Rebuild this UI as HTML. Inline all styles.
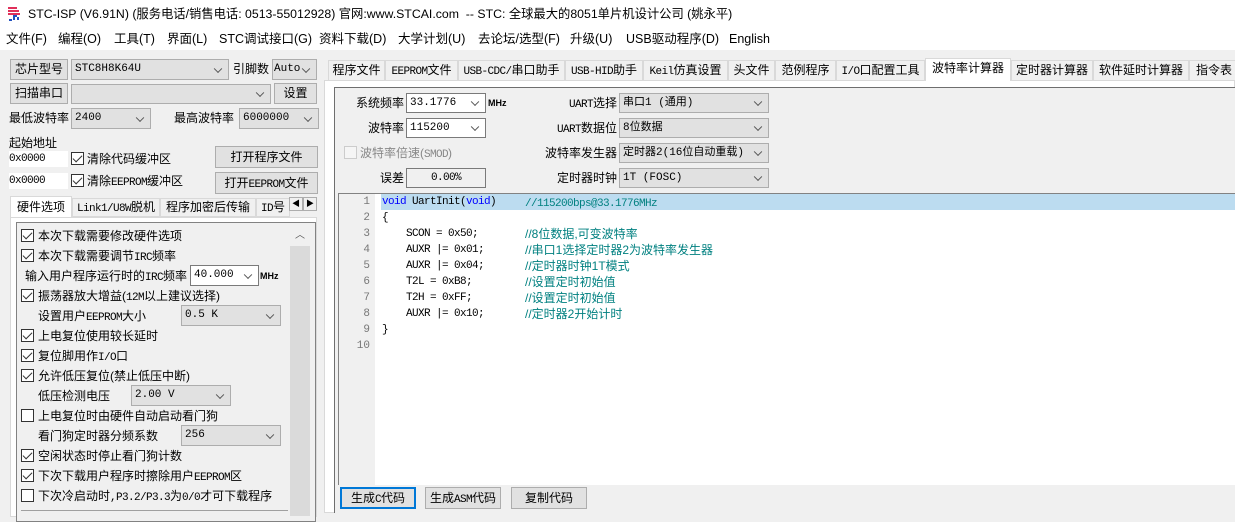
<!DOCTYPE html>
<html><head><meta charset="utf-8"><style>
*{box-sizing:border-box;margin:0;padding:0}
body{width:1235px;height:513px;overflow:hidden;background:#f0f0f0;font-family:"Liberation Sans","Noto Sans CJK SC",sans-serif;font-size:12px;color:#000;position:relative}
.a{position:absolute;white-space:nowrap;line-height:16px}
.n{font-family:"Liberation Mono",monospace;font-size:11px;letter-spacing:-0.6px}
.btn{position:absolute;background:#e1e1e1;border:1px solid #adadad;text-align:center;font-size:12px;white-space:nowrap}
.sel{position:absolute;background:#e1e1e1;border:1px solid #adadad;font-family:"Liberation Mono","Noto Sans CJK SC",monospace;font-size:11px;padding-left:3px;white-space:nowrap;overflow:hidden}
.sel.w{background:#fff;border-color:#7a7a7a}
.sel:after{content:"";position:absolute;right:7px;top:50%;width:5px;height:5px;border-right:1px solid #555;border-bottom:1px solid #555;transform:translateY(-70%) rotate(45deg)}
.cb{position:absolute;width:13px;height:13px;border:1px solid #333;background:#fff}
.cb.k:after{content:"";position:absolute;left:3px;top:0px;width:4px;height:8px;border-right:1px solid #333;border-bottom:1px solid #333;transform:rotate(45deg)}
.tab{position:absolute;top:60px;height:20px;border:1px solid #d9d9d9;border-bottom:none;background:#f0f0f0;text-align:center;font-size:12px;line-height:19px;white-space:nowrap;overflow:hidden}
.cl{position:absolute;font-family:"Liberation Mono",monospace;font-size:11px;letter-spacing:-0.6px;white-space:pre;line-height:16px}
.cm{position:absolute;left:525px;color:#008080;white-space:pre;font-size:12px;line-height:16px}
.ln{position:absolute;left:338px;width:32px;text-align:right;color:#777;font-family:"Liberation Mono",monospace;font-size:11px;line-height:16px}
.m{position:absolute;top:30px;font-size:12.5px;line-height:18px;white-space:nowrap}
.r{position:absolute;white-space:nowrap;line-height:16px;font-size:12px;text-align:right}
</style></head><body>
<div class="a" style="left:0;top:0;width:1235px;height:28px;background:#fff"></div>
<svg class="a" style="left:7px;top:6px" width="16" height="16"><path d="M1 2h9M1 5h11M1 8h12" stroke="#e0305a" stroke-width="2"/><path d="M2 14h3M7 14v-4h3M11 14v-3" stroke="#2050c0" stroke-width="2" fill="none"/></svg>
<div class="a" style="left:28px;top:6px;font-size:12.3px">STC-ISP (V6.91N) (服务电话/销售电话: 0513-55012928) 官网:www.STCAI.com&nbsp; -- STC: 全球最大的8051单片机设计公司 (姚永平)</div>
<div class="a" style="left:0;top:28px;width:1235px;height:22px;background:#fff"></div>
<div class="m" style="left:6px">文件(F)</div>
<div class="m" style="left:58px">编程(O)</div>
<div class="m" style="left:114px">工具(T)</div>
<div class="m" style="left:167px">界面(L)</div>
<div class="m" style="left:219px">STC调试接口(G)</div>
<div class="m" style="left:319px">资料下载(D)</div>
<div class="m" style="left:398px">大学计划(U)</div>
<div class="m" style="left:478px">去论坛/选型(F)</div>
<div class="m" style="left:570px">升级(U)</div>
<div class="m" style="left:626px">USB驱动程序(D)</div>
<div class="m" style="left:729px">English</div>

<!-- left panel -->
<div class="btn" style="left:10px;top:59px;width:58px;height:21px;line-height:19px">芯片型号</div>
<div class="sel" style="left:71px;top:59px;width:158px;height:21px;line-height:19px">STC8H8K64U</div>
<div class="a" style="left:233px;top:61px">引脚数</div>
<div class="sel" style="left:272px;top:59px;width:45px;height:21px;line-height:19px;padding-left:1px">Auto</div>
<div class="btn" style="left:10px;top:83px;width:58px;height:21px;line-height:19px">扫描串口</div>
<div class="sel" style="left:71px;top:84px;width:200px;height:20px"></div>
<div class="btn" style="left:274px;top:83px;width:43px;height:21px;line-height:19px">设置</div>
<div class="a" style="left:9px;top:110px">最低波特率</div>
<div class="sel" style="left:71px;top:108px;width:80px;height:21px;line-height:19px">2400</div>
<div class="a" style="left:174px;top:110px">最高波特率</div>
<div class="sel" style="left:239px;top:108px;width:80px;height:21px;line-height:19px">6000000</div>
<div class="a" style="left:9px;top:135px">起始地址</div>
<div class="a n" style="left:9px;top:151px;width:59px;height:16px;background:#fff">0x0000</div>
<div class="cb k" style="left:71px;top:152px"></div>
<div class="a" style="left:87px;top:151px">清除代码缓冲区</div>
<div class="btn" style="left:215px;top:146px;width:103px;height:22px;line-height:20px">打开程序文件</div>
<div class="a n" style="left:9px;top:173px;width:59px;height:16px;background:#fff">0x0000</div>
<div class="cb k" style="left:71px;top:174px"></div>
<div class="a" style="left:87px;top:173px">清除<span class="n">EEPROM</span>缓冲区</div>
<div class="btn" style="left:215px;top:172px;width:103px;height:22px;line-height:20px">打开<span class="n">EEPROM</span>文件</div>
<!-- left tabs -->
<div class="a" style="left:10px;top:196px;width:62px;height:22px;background:#fff;border:1px solid #d9d9d9;border-bottom:none;text-align:center;line-height:20px">硬件选项</div>
<div class="a" style="left:72px;top:198px;width:88px;height:19px;border:1px solid #d9d9d9;text-align:center;line-height:17px"><span class="n">Link1/U8W</span>脱机</div>
<div class="a" style="left:160px;top:198px;width:96px;height:19px;border:1px solid #d9d9d9;text-align:center;line-height:17px">程序加密后传输</div>
<div class="a" style="left:256px;top:198px;width:34px;height:19px;border:1px solid #d9d9d9;line-height:17px;padding-left:4px;overflow:hidden"><span class="n">ID</span>号</div>
<div class="a" style="left:289px;top:197px;width:14px;height:14px;border:1px solid #adadad;background:#f0f0f0;font-size:8px;text-align:center;line-height:12px">◀</div>
<div class="a" style="left:303px;top:197px;width:14px;height:14px;border:1px solid #adadad;background:#f0f0f0;font-size:8px;text-align:center;line-height:12px">▶</div>
<div class="a" style="left:10px;top:217px;width:307px;height:300px;background:#fff;border:1px solid #d9d9d9"></div>
<div class="a" style="left:16px;top:222px;width:300px;height:300px;border:1px solid #828282;background:#f0f0f0"></div>
<div class="a" style="left:290px;top:226px;width:20px;height:290px;background:#dadada"></div>
<div class="a" style="left:290px;top:226px;width:20px;height:20px;background:#f0f0f0;text-align:center;font-size:10px;line-height:20px;color:#555">︿</div>
<div class="cb k" style="left:21px;top:229px"></div><div class="a" style="left:38px;top:228px">本次下载需要修改硬件选项</div>
<div class="cb k" style="left:21px;top:249px"></div><div class="a" style="left:38px;top:248px">本次下载需要调节<span class="n">IRC</span>频率</div>
<div class="a" style="left:25px;top:268px">输入用户程序运行时的<span class="n">IRC</span>频率</div>
<div class="sel w" style="left:190px;top:265px;width:69px;height:21px;line-height:19px">40.000</div>
<div class="a" style="left:260px;top:268px;font-size:9px;font-weight:bold">MHz</div>
<div class="cb k" style="left:21px;top:289px"></div><div class="a" style="left:38px;top:288px">振荡器放大增益(<span class="n">12M</span>以上建议选择)</div>
<div class="a" style="left:38px;top:308px">设置用户<span class="n">EEPROM</span>大小</div>
<div class="sel" style="left:181px;top:305px;width:100px;height:21px;line-height:19px">0.5 K</div>
<div class="cb k" style="left:21px;top:329px"></div><div class="a" style="left:38px;top:328px">上电复位使用较长延时</div>
<div class="cb k" style="left:21px;top:349px"></div><div class="a" style="left:38px;top:348px">复位脚用作<span class="n">I/O</span>口</div>
<div class="cb k" style="left:21px;top:369px"></div><div class="a" style="left:38px;top:368px">允许低压复位(禁止低压中断)</div>
<div class="a" style="left:38px;top:388px">低压检测电压</div>
<div class="sel" style="left:131px;top:385px;width:100px;height:21px;line-height:19px">2.00 V</div>
<div class="cb" style="left:21px;top:409px"></div><div class="a" style="left:38px;top:408px">上电复位时由硬件自动启动看门狗</div>
<div class="a" style="left:38px;top:428px">看门狗定时器分频系数</div>
<div class="sel" style="left:181px;top:425px;width:100px;height:21px;line-height:19px">256</div>
<div class="cb k" style="left:21px;top:449px"></div><div class="a" style="left:38px;top:448px">空闲状态时停止看门狗计数</div>
<div class="cb k" style="left:21px;top:469px"></div><div class="a" style="left:38px;top:468px">下次下载用户程序时擦除用户<span class="n">EEPROM</span>区</div>
<div class="cb" style="left:21px;top:489px"></div><div class="a" style="left:38px;top:488px">下次冷启动时<span class="n">,P3.2/P3.3</span>为<span class="n">0/0</span>才可下载程序</div>
<div class="a" style="left:21px;top:510px;width:267px;height:1px;background:#a0a0a0"></div>

<!-- right tabs -->
<div class="tab" style="left:328px;width:57px">程序文件</div>
<div class="tab" style="left:385px;width:73px"><span class="n">EEPROM</span>文件</div>
<div class="tab" style="left:458px;width:107px"><span class="n">USB-CDC/</span>串口助手</div>
<div class="tab" style="left:565px;width:78px"><span class="n">USB-HID</span>助手</div>
<div class="tab" style="left:643px;width:85px"><span class="n">Keil</span>仿真设置</div>
<div class="tab" style="left:728px;width:47px">头文件</div>
<div class="tab" style="left:775px;width:61px">范例程序</div>
<div class="tab" style="left:836px;width:89px"><span class="n">I/O</span>口配置工具</div>
<div class="tab" style="left:925px;top:58px;height:23px;width:86px;background:#fff;z-index:2">波特率计算器</div>
<div class="tab" style="left:1011px;width:82px">定时器计算器</div>
<div class="tab" style="left:1093px;width:96px">软件延时计算器</div>
<div class="tab" style="left:1189px;width:50px">指令表</div>
<div class="a" style="left:324px;top:80px;width:911px;height:433px;background:#fff;border:1px solid #d9d9d9"></div>
<div class="a" style="left:334px;top:87px;width:901px;height:426px;background:#f0f0f0;border-top:1px solid #6e6e6e;border-left:1px solid #6e6e6e"></div>

<div class="r" style="right:831px;top:95px">系统频率</div>
<div class="sel w" style="left:406px;top:93px;width:80px;height:20px;line-height:18px">33.1776</div>
<div class="a" style="left:488px;top:95px;font-size:9px;font-weight:bold">MHz</div>
<div class="r" style="right:831px;top:120px">波特率</div>
<div class="sel w" style="left:406px;top:118px;width:80px;height:20px;line-height:18px">115200</div>
<div class="a" style="left:344px;top:146px;width:13px;height:13px;border:1px solid #ccc;background:#f5f5f5"></div>
<div class="a" style="left:360px;top:145px;color:#888">波特率倍速(<span class="n">SMOD</span>)</div>
<div class="r" style="right:831px;top:170px">误差</div>
<div class="a n" style="left:406px;top:168px;width:80px;height:20px;border:1px solid #7a7a7a;text-align:center;line-height:18px">0.00%</div>

<div class="r" style="right:618px;top:95px"><span class="n">UART</span>选择</div>
<div class="sel" style="left:619px;top:93px;width:150px;height:20px;line-height:18px">串口1 (通用)</div>
<div class="r" style="right:618px;top:120px"><span class="n">UART</span>数据位</div>
<div class="sel" style="left:619px;top:118px;width:150px;height:20px;line-height:18px">8位数据</div>
<div class="r" style="right:618px;top:145px">波特率发生器</div>
<div class="sel" style="left:619px;top:143px;width:150px;height:20px;line-height:18px">定时器2(16位自动重载)</div>
<div class="r" style="right:618px;top:170px">定时器时钟</div>
<div class="sel" style="left:619px;top:168px;width:150px;height:20px;line-height:18px">1T  (FOSC)</div>

<!-- code -->
<div class="a" style="left:338px;top:193px;width:897px;height:292px;background:#fff;border-left:1px solid #828282;border-top:1px solid #828282"></div>
<div class="a" style="left:339px;top:194px;width:36px;height:291px;background:#f0f0f0"></div>
<div class="a" style="left:381px;top:194px;width:854px;height:16px;background:#bcdcf0"></div>
<div class="ln" style="top:194px">1<br>2<br>3<br>4<br>5<br>6<br>7<br>8<br>9<br>10</div>
<div class="cl" style="left:382px;top:194px"><span style="color:#00f">void</span> UartInit(<span style="color:#00f">void</span>)
{
    SCON = 0x50;
    AUXR |= 0x01;
    AUXR |= 0x04;
    T2L = 0xB8;
    T2H = 0xFF;
    AUXR |= 0x10;
}</div>
<div class="cm" style="top:194px"><span class="n">//115200bps@33.1776MHz</span></div>
<div class="cm" style="top:226px">//8位数据,可变波特率</div>
<div class="cm" style="top:242px">//串口1选择定时器2为波特率发生器</div>
<div class="cm" style="top:258px">//定时器时钟1T模式</div>
<div class="cm" style="top:274px">//设置定时初始值</div>
<div class="cm" style="top:290px">//设置定时初始值</div>
<div class="cm" style="top:306px">//定时器2开始计时</div>

<div class="btn" style="left:340px;top:487px;width:76px;height:22px;line-height:18px;border:2px solid #0078d7">生成<span class="n">C</span>代码</div>
<div class="btn" style="left:425px;top:487px;width:76px;height:22px;line-height:20px">生成<span class="n">ASM</span>代码</div>
<div class="btn" style="left:511px;top:487px;width:76px;height:22px;line-height:20px">复制代码</div>
</body></html>
